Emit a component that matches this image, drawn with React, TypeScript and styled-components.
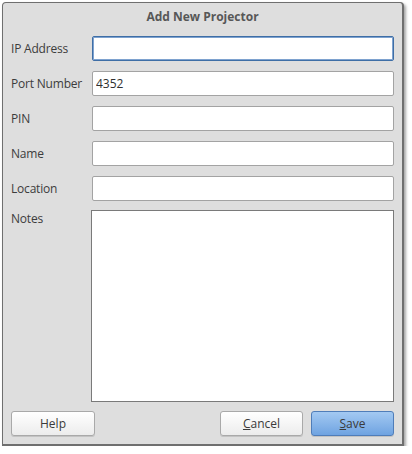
import styled, { createGlobalStyle } from "styled-components";

const GlobalStyle = createGlobalStyle`
  html, body {
    margin: 0;
    padding: 0;
    background: #ffffff;
  }
  body {
    font-family: "Open Sans", "DejaVu Sans", sans-serif;
  }
`;

const Window = styled.div`
  box-sizing: border-box;
  margin: 2px 0 0 2px;
  width: 402px;
  height: 444px;
  background: #dedede;
  border: 1px solid #6f6f6f;
  border-right-width: 2px;
  border-bottom-width: 2px;
  border-radius: 4px 4px 0 0;
  box-shadow: 2px 2px 3px rgba(0, 0, 0, 0.35);
  display: flex;
  flex-direction: column;
  padding: 0 8px 8px 8px;
  color: #3c3c3c;
  font-size: 12px;
`;

const Title = styled.div`
  height: 27px;
  display: flex;
  align-items: center;
  justify-content: center;
  font-weight: 700;
  color: #575757;
  font-size: 12px;
`;

const Form = styled.div`
  margin-top: 7px;
  display: grid;
  grid-template-columns: 81px 302px;
  grid-template-rows: repeat(5, 25px) 192px;
  row-gap: 10px;
`;

const Label = styled.label<{ $top?: boolean }>`
  display: flex;
  align-items: ${(p) => (p.$top ? "flex-start" : "center")};
  margin-top: ${(p) => (p.$top ? "-1px" : "0")};
  white-space: nowrap;
  letter-spacing: -0.2px;
`;

const Field = styled.input<{ $focus?: boolean }>`
  box-sizing: border-box;
  width: 100%;
  height: 25px;
  margin: 0;
  padding: 0 3px;
  border: 1px solid ${(p) => (p.$focus ? "#3e6ea6" : "#a3a3a3")};
  box-shadow: ${(p) => (p.$focus ? "inset 0 0 0 1px #7ea2cf" : "none")};
  border-radius: 2px;
  background: #ffffff;
  font-family: inherit;
  font-size: 12px;
  color: #2f2f2f;
  outline: none;
`;

const Notes = styled.textarea`
  box-sizing: border-box;
  width: 303px;
  height: 192px;
  margin: -1px 0 0 -1px;
  border: 1px solid #7a7a7a;
  border-radius: 0;
  background: #ffffff;
  resize: none;
  outline: none;
`;

const Buttons = styled.div`
  margin-top: 8px;
  display: flex;
  align-items: center;
  gap: 8px;
`;

const Spacer = styled.div`
  flex: 1;
`;

const Button = styled.button<{ $primary?: boolean; $wide?: boolean }>`
  box-sizing: border-box;
  width: ${(p) => (p.$wide ? "84px" : "83px")};
  height: 25px;
  border-radius: 3px;
  border: 1px solid ${(p) => (p.$primary ? "#4f7db9" : "#a9a9a9")};
  background: ${(p) =>
    p.$primary
      ? "linear-gradient(#a3c9f2, #6fa3e1)"
      : "linear-gradient(#ffffff, #ececec)"};
  box-shadow: 0 1px 0 rgba(0, 0, 0, 0.12);
  font-family: inherit;
  font-size: 12px;
  color: #3a3a3a;
  padding: 0;
  cursor: pointer;
`;

const Mnemonic = styled.span`
  text-decoration: underline;
`;

const App = () => {
  return (
    <>
      <GlobalStyle />
      <Window>
        <Title>Add New Projector</Title>
        <Form>
          <Label>IP Address</Label>
          <Field $focus />
          <Label>Port Number</Label>
          <Field defaultValue="4352" />
          <Label>PIN</Label>
          <Field />
          <Label>Name</Label>
          <Field />
          <Label>Location</Label>
          <Field />
          <Label $top>Notes</Label>
          <Notes />
        </Form>
        <Buttons>
          <Button $wide>Help</Button>
          <Spacer />
          <Button>
            <Mnemonic>C</Mnemonic>ancel
          </Button>
          <Button $primary>
            <Mnemonic>S</Mnemonic>ave
          </Button>
        </Buttons>
      </Window>
    </>
  );
};

export default App;
